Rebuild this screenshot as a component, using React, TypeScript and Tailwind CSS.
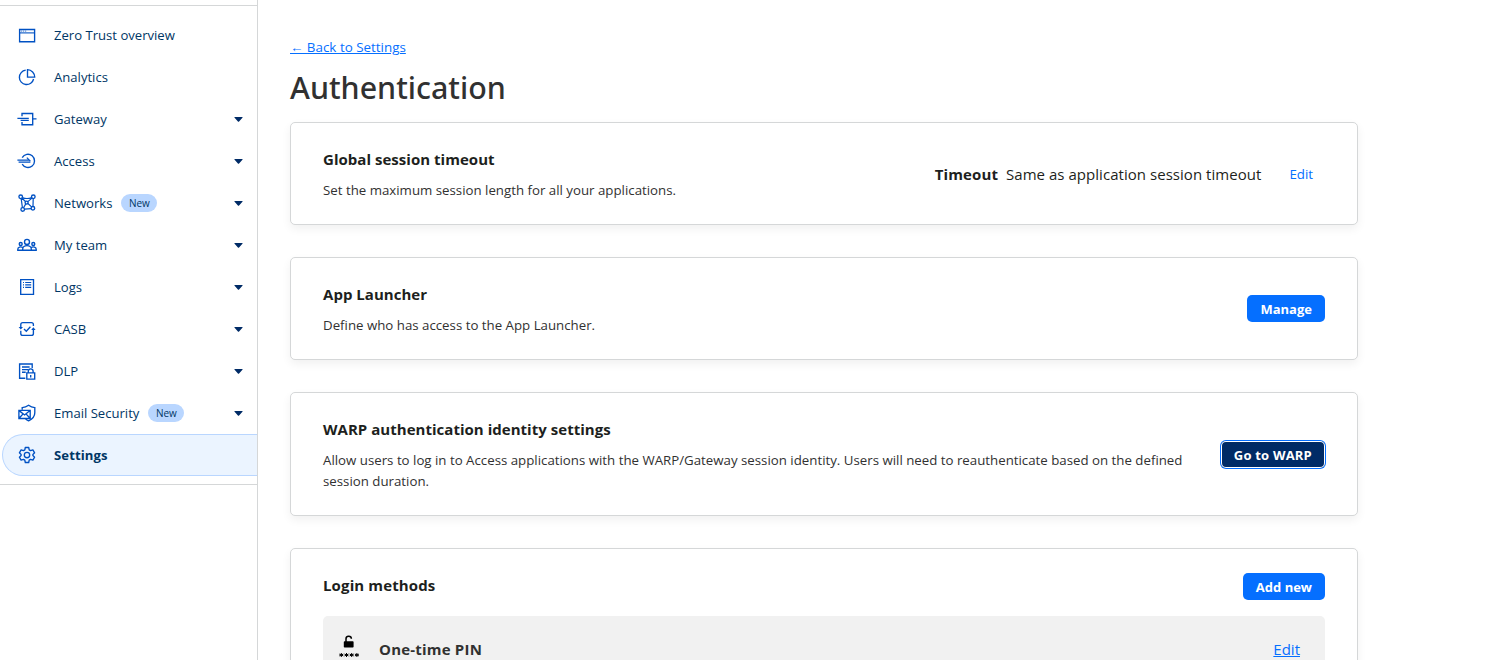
import type { ReactNode } from 'react';
import clsx from 'clsx';

type NavItem = {
  label: string;
  icon: ReactNode;
  badge?: string;
  expandable?: boolean;
  active?: boolean;
};

function Icon({ children }: { children: ReactNode }) {
  return (
    <svg
      viewBox="0 0 20 20"
      className="h-5 w-5 shrink-0 overflow-visible text-[#0051c3]"
      fill="none"
      stroke="currentColor"
      strokeWidth="1.35"
    >
      {children}
    </svg>
  );
}

const OverviewIcon = (
  <Icon>
    <path d="M2.6 4.5h15v12.2h-15z" />
    <path d="M2.6 7.9h15" strokeWidth="1.1" />
    <path d="M4.2 6.1h1M6.2 6.1h1M8.2 6.1h1" strokeWidth=".9" />
  </Icon>
);

const AnalyticsIcon = (
  <Icon>
    <path d="M8.7 3.2A7.2 7.2 0 1 0 16.6 12" />
    <path d="M10.5 2.7v7.4h7.2a7.3 7.3 0 0 0-7.2-7.4z" />
  </Icon>
);

const GatewayIcon = (
  <Icon>
    <path d="M5 7.2V4.5h10.7v11.2H5V13" />
    <path d="M.4 9.4h11.4M3.6 11.4h8.2M15.7 9.8h3.8" />
  </Icon>
);

const AccessIcon = (
  <Icon>
    <path d="M5.2 6.6a6.6 6.6 0 1 1 0 6.6" />
    <path d="M.4 9.1h12.2M9.8 6.6l3.6 3.5M1.6 11.1h11.8" strokeWidth="1.2" />
  </Icon>
);

const NetworksIcon = (
  <Icon>
    <circle cx="3.7" cy="3.8" r="1.8" />
    <circle cx="16.3" cy="3.8" r="1.8" />
    <circle cx="5.7" cy="16.4" r="1.8" />
    <circle cx="15.9" cy="15.3" r="1.8" />
    <circle cx="9.6" cy="9.6" r="1.5" />
    <path d="M5.4 4.6q4.6 1.8 9.2 0M4.2 5.6l1.2 9M16.2 5.6l-.2 7.9M7.5 16.2l6.6-.6M5 5.2l3.5 3.3M10.8 8.6l4.2-3.5M8.8 10.9l-2.3 3.8M10.9 10.5l3.7 3.4" strokeWidth="1.2" />
  </Icon>
);

const TeamIcon = (
  <Icon>
    <circle cx="10" cy="6.9" r="2.5" />
    <circle cx="3.7" cy="9" r="1.5" />
    <circle cx="16.3" cy="9" r="1.5" />
    <path d="M5.7 15.2v-1.3a4.3 3.3 0 0 1 8.6 0v1.3zM5.7 15.2H.8v-1c0-2 3-2.8 4.8-1.8M14.3 15.2h4.9v-1c0-2-3-2.8-4.8-1.8" />
  </Icon>
);

const LogsIcon = (
  <Icon>
    <path d="M3.7 2.6h12.8v14.8H3.7z" />
    <path d="M6 5.5h1M8.2 5.5h6M6 7.9h1M8.2 7.9h6M6 10.3h1M8.2 10.3h6" strokeWidth="1.2" />
  </Icon>
);

const CasbIcon = (
  <Icon>
    <path d="M3.8 8.5V5.6q0-2 2-2h8.6q2 0 2 2v1.5M16.4 9.8v4.6q0 2-2 2H5.8q-2 0-2-2v-2.6" />
    <path d="M1.6 8h4.4L3.8 10.6zM14.2 10.9h4.4l-2.2-2.6z" fill="currentColor" stroke="none" />
    <path d="M7 10l2.3 2.3 4.1-4.5" />
  </Icon>
);

const DlpIcon = (
  <Icon>
    <path d="M8.3 17.2H2.6V3h12.6v4" />
    <path d="M5 6h7.6M5 8.6h6M5 11.2h3.7" />
    <path d="M9.8 11.9h7.9v6.2H9.8zM11.3 11.9v-1.6a2.4 2.4 0 0 1 4.8 0v1.6M13.7 14v2.4" />
  </Icon>
);

const EmailIcon = (
  <Icon>
    <path d="M1.9 7.3h11.3v8.2H1.9zM2.1 7.6l5.5 4.4 5.4-4.4M2.1 15.3l4-4.4M13 15.3l-4-4.4" />
    <path d="M5.2 6.7V4.6q3.5-.2 6.4-2.3 2.7 2.1 6.2 2.3v5.2q0 5.2-6.2 8-1.8-.8-3-1.9" />
  </Icon>
);

const SettingsIcon = (
  <Icon>
    <circle cx="10" cy="10" r="2.7" />
    <path d="M8.3 2.5h3.4l.5 2.3 1.4.8 2.3-.7 1.7 2.9L15.9 9.4v1.2l1.7 1.6-1.7 2.9-2.3-.7-1.4.8-.5 2.3H8.3l-.5-2.3-1.4-.8-2.3.7-1.7-2.9 1.7-1.6V9.4L2.4 7.8l1.7-2.9 2.3.7 1.4-.8z" strokeLinejoin="round" />
  </Icon>
);

const navItems: NavItem[] = [
  { label: 'Zero Trust overview', icon: OverviewIcon },
  { label: 'Analytics', icon: AnalyticsIcon },
  { label: 'Gateway', icon: GatewayIcon, expandable: true },
  { label: 'Access', icon: AccessIcon, expandable: true },
  { label: 'Networks', icon: NetworksIcon, badge: 'New', expandable: true },
  { label: 'My team', icon: TeamIcon, expandable: true },
  { label: 'Logs', icon: LogsIcon, expandable: true },
  { label: 'CASB', icon: CasbIcon, expandable: true },
  { label: 'DLP', icon: DlpIcon, expandable: true },
  { label: 'Email Security', icon: EmailIcon, badge: 'New', expandable: true },
  { label: 'Settings', icon: SettingsIcon, active: true },
];

function NavRow({ item }: { item: NavItem }) {
  return (
    <a
      className={clsx(
        'flex h-[42px] items-center text-[13.1px] whitespace-nowrap text-[#003665]',
        item.active
          ? 'ml-0.5 rounded-l-full border border-r-0 border-[#b9d6ff] bg-[#ebf4ff] pl-3.5 font-bold tracking-[0.1px]'
          : 'pl-[17px]',
      )}
    >
      {item.icon}
      <span className="ml-[17px] pt-px">{item.label}</span>
      {item.badge && (
        <span className="ml-[9px] flex h-[18px] w-9 items-center justify-center rounded-full bg-[#b9d6ff] pt-px text-[10px]">
          {item.badge}
        </span>
      )}
      {item.expandable && (
        <svg viewBox="0 0 10 6" className="mr-3.5 ml-auto h-[5px] w-[9px]" fill="#002b66">
          <path d="M.3 0h9.4q.5.4 0 .9L5.7 5.3q-.7.6-1.4 0L.3.9Q-.2.4.3 0z" />
        </svg>
      )}
    </a>
  );
}

function Sidebar() {
  return (
    <aside className="h-full w-[258px] shrink-0 border-r border-[#d5d7d8] pt-[5px]">
      <nav className="border-y border-[#d5d7d8] pt-2 pb-2">
        {navItems.map((item) => (
          <NavRow key={item.label} item={item} />
        ))}
      </nav>
    </aside>
  );
}

function Button({ children, focused }: { children: ReactNode; focused?: boolean }) {
  return (
    <button
      className={clsx(
        'h-[27px] shrink-0 rounded-[5px] px-[13px] pt-px text-[13px] leading-[26px] font-bold whitespace-nowrap text-white',
        focused
          ? 'bg-[#002b66] tracking-[0.2px] shadow-[inset_0_0_0_1px_#fff,0_0_0_1px_#056fff]'
          : 'bg-[#056fff]',
      )}
    >
      {children}
    </button>
  );
}

type CardProps = {
  title: string;
  description: string;
  action: ReactNode;
};

function Card({ title, description, action }: CardProps) {
  return (
    <section className="flex items-center justify-between rounded-[5px] border border-[#d5d7d8] bg-white px-8 py-6 shadow-[0_4px_10px_rgba(0,0,0,0.06)]">
      <div>
        <h2 className="text-[15px] leading-6 font-bold tracking-[0.03px] text-[#1d1f20]">{title}</h2>
        <p className="mt-[9px] -mb-px max-w-[870px] text-[13.28px] leading-[21px] text-[#313131]">{description}</p>
      </div>
      {action}
    </section>
  );
}

export default function App() {
  return (
    <div className="flex h-[660px] overflow-hidden bg-white font-['Open_Sans','Noto_Sans',sans-serif]">
      <Sidebar />

      <main className="flex w-[1132px] flex-col px-8 pt-[37px]">
        <a className="self-start text-[13.4px] leading-5 text-[#056fff] underline">← Back to Settings</a>
        <h1 className="mt-[11px] font-['Noto_Sans',sans-serif] text-[30.4px] leading-10 font-medium text-[#313131]">
          Authentication
        </h1>

        <div className="mt-3.5 flex flex-col gap-8">
          <Card
            title="Global session timeout"
            description="Set the maximum session length for all your applications."
            action={
              <div className="flex items-center pt-px text-[15px] text-[#1d1f20]">
                <span className="font-bold tracking-[0.1px]">Timeout</span>
                <span className="ml-2 tracking-[0.04px]">Same as application session timeout</span>
                <a className="mr-3 ml-7 pt-px text-[13.3px] text-[#056fff]">Edit</a>
              </div>
            }
          />
          <Card
            title="App Launcher"
            description="Define who has access to the App Launcher."
            action={<Button>Manage</Button>}
          />
          <Card
            title="WARP authentication identity settings"
            description="Allow users to log in to Access applications with the WARP/Gateway session identity. Users will need to reauthenticate based on the defined session duration."
            action={<Button focused>Go to WARP</Button>}
          />

          {/* Login methods */}
          <section className="rounded-[5px] border border-[#d5d7d8] bg-white px-8 pt-6 pb-8 shadow-[0_4px_10px_rgba(0,0,0,0.06)]">
            <div className="flex items-start justify-between">
              <h2 className="text-[15px] leading-6 font-bold tracking-[0.13px] text-[#1d1f20]">Login methods</h2>
              <Button>Add new</Button>
            </div>
            <div className="mt-4 flex h-[66px] items-center rounded-[5px] bg-[#f1f1f1] pr-[25px] pl-4">
              <svg viewBox="0 0 20 26" className="mb-[5px] h-[26px] w-5" fill="#000">
                <rect x="4.8" y="7.3" width="9.8" height="6.3" rx=".8" />
                <path d="M7 8V5a2.7 2.7 0 0 1 5.4-.3" fill="none" stroke="#000" strokeWidth="1.5" />
                <path
                  d="M2.3 19v4M.3 20.1l4 1.8M4.3 20.1l-4 1.8M7.5 19v4M5.5 20.1l4 1.8M9.5 20.1l-4 1.8M12.7 19v4M10.7 20.1l4 1.8M14.7 20.1l-4 1.8M17.9 19v4M15.9 20.1l4 1.8M19.9 20.1l-4 1.8"
                  stroke="#000"
                  strokeWidth="1"
                />
              </svg>
              <span className="ml-5 text-[15px] font-bold tracking-[0.2px] text-[#313131]">One-time PIN</span>
              <a className="ml-auto text-[15px] text-[#056fff] underline">Edit</a>
            </div>
          </section>
        </div>
      </main>
    </div>
  );
}
